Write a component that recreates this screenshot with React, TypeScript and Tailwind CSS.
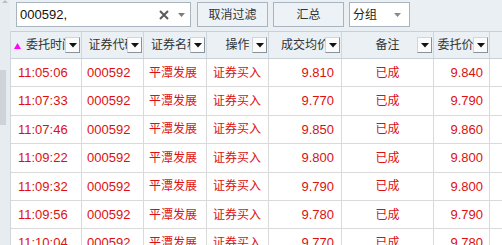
import React from "react";

const rows = [
  { time: "11:05:06", avg: "9.810", price: "9.840" },
  { time: "11:07:33", avg: "9.770", price: "9.790" },
  { time: "11:07:46", avg: "9.850", price: "9.860" },
  { time: "11:09:22", avg: "9.800", price: "9.800" },
  { time: "11:09:32", avg: "9.790", price: "9.800" },
  { time: "11:09:56", avg: "9.780", price: "9.790" },
  { time: "11:10:04", avg: "9.770", price: "9.780" },
];

const font = "font-['Liberation_Sans','Noto_Sans_CJK_SC',sans-serif]";

function DropBox() {
  return (
    <div className="absolute right-[1px] top-[5px] w-[15px] h-[16px] bg-[#fbfbfb] border border-t-[#d0d6dc] border-l-[#d0d6dc] border-r-[#8a9299] border-b-[#8a9299] flex items-center justify-center">
      <svg width="8" height="5" viewBox="0 0 8 5">
        <path d="M0 0 H8 L4 4.5 Z" fill="#111" />
      </svg>
    </div>
  );
}

function Head({ label, w, first }: { label: string; w: string; first?: boolean }) {
  return (
    <div className={`relative ${w} h-full shrink-0 border-r border-[#cfd6dc] overflow-hidden flex items-center ${first ? "justify-start pl-[15px]" : "justify-center"}`}>
      {first && (
        <svg className="absolute left-[3px] top-[11px]" width="7" height="6" viewBox="0 0 7 6">
          <path d="M3.5 0 L7 6 H0 Z" fill="#ff00ff" />
        </svg>
      )}
      <span className="whitespace-nowrap text-[12px] text-[#333]">{label}</span>
      <DropBox />
    </div>
  );
}

export default function App() {
  return (
    <div className={`w-[502px] h-[245px] overflow-hidden flex bg-white ${font}`}>
      {/* outer scrollbar strip */}
      <div className="w-[10px] h-full shrink-0 bg-[#e6ecf0] relative">
        <svg className="absolute left-[2px] top-0" width="6" height="3" viewBox="0 0 6 3">
          <path d="M3 0 L6 3 H0 Z" fill="#b8c0c6" />
        </svg>
        <div className="absolute left-0 top-[70px] w-[6px] h-[55px] bg-[#cdd3d8]" />
      </div>

      <div className="flex-1 flex flex-col min-w-0">
        {/* toolbar */}
        <div className="h-[31px] shrink-0 bg-[#e9eff3] flex items-start pt-[2px] pl-[6px] gap-[5px]">
          <div className="w-[175px] h-[25px] bg-white border border-[#a9b4be] flex items-center pl-[3px] pr-[5px]">
            <span className="text-[13px] text-[#111] flex-1">000592,</span>
            <svg width="10" height="10" viewBox="0 0 10 10" className="mr-[9px]">
              <path d="M1 1 L9 9 M9 1 L1 9" stroke="#5a5a5a" strokeWidth="2" />
            </svg>
            <svg width="7" height="4" viewBox="0 0 7 4">
              <path d="M0 0 H7 L3.5 4 Z" fill="#7d7d7d" />
            </svg>
          </div>
          <div className="w-[71px] h-[25px] ml-[1px] bg-[#edf2f6] border border-[#a9b4be] flex items-center justify-center text-[12px] text-[#333]">
            取消过滤
          </div>
          <div className="w-[71px] h-[25px] bg-[#edf2f6] border border-[#a9b4be] flex items-center justify-center text-[12px] text-[#333]">
            汇总
          </div>
          <div className="w-[61px] h-[25px] bg-white border border-[#a9b4be] flex items-center pl-[3px] pr-[8px]">
            <span className="text-[12px] text-[#222] flex-1">分组</span>
            <svg width="7" height="4" viewBox="0 0 7 4">
              <path d="M0 0 H7 L3.5 4 Z" fill="#8a8a8a" />
            </svg>
          </div>
        </div>

        {/* table */}
        <div className="flex-1 border-l border-[#cfd6dc] flex flex-col">
          <div className="h-[28px] shrink-0 bg-[#eaf0f4] border-t border-b border-[#c8d0d7] flex">
            <Head label="委托时间" w="w-[71px]" first />
            <Head label="证券代码" w="w-[62px]" />
            <Head label="证券名称" w="w-[63px]" />
            <Head label="操作" w="w-[62px]" />
            <Head label="成交均价" w="w-[73px]" />
            <Head label="备注" w="w-[92px]" />
            <Head label="委托价格" w="w-[56px]" />
            <div className="flex-1" />
          </div>

          {rows.map((r) => (
            <div key={r.time} className="h-[28.4px] shrink-0 flex border-b border-[#dadada] text-[#dd1010]">
              <div className="w-[71px] shrink-0 border-r border-[#dadada] flex items-center pl-[7px] text-[13px]">{r.time}</div>
              <div className="w-[62px] shrink-0 border-r border-[#dadada] flex items-center pl-[5px] text-[13px]">000592</div>
              <div className="w-[63px] shrink-0 border-r border-[#dadada] flex items-center pl-[5px] text-[12px] whitespace-nowrap">平潭发展</div>
              <div className="w-[62px] shrink-0 border-r border-[#dadada] flex items-center pl-[6px] text-[12px] whitespace-nowrap">证券买入</div>
              <div className="w-[73px] shrink-0 border-r border-[#dadada] flex items-center justify-end pr-[7px] text-[13px]">{r.avg}</div>
              <div className="w-[92px] shrink-0 border-r border-[#dadada] flex items-center justify-center text-[12px]">已成</div>
              <div className="w-[56px] shrink-0 border-r border-[#dadada] flex items-center justify-end pr-[6px] text-[13px]">{r.price}</div>
              <div className="flex-1" />
            </div>
          ))}
        </div>
      </div>
    </div>
  );
}
